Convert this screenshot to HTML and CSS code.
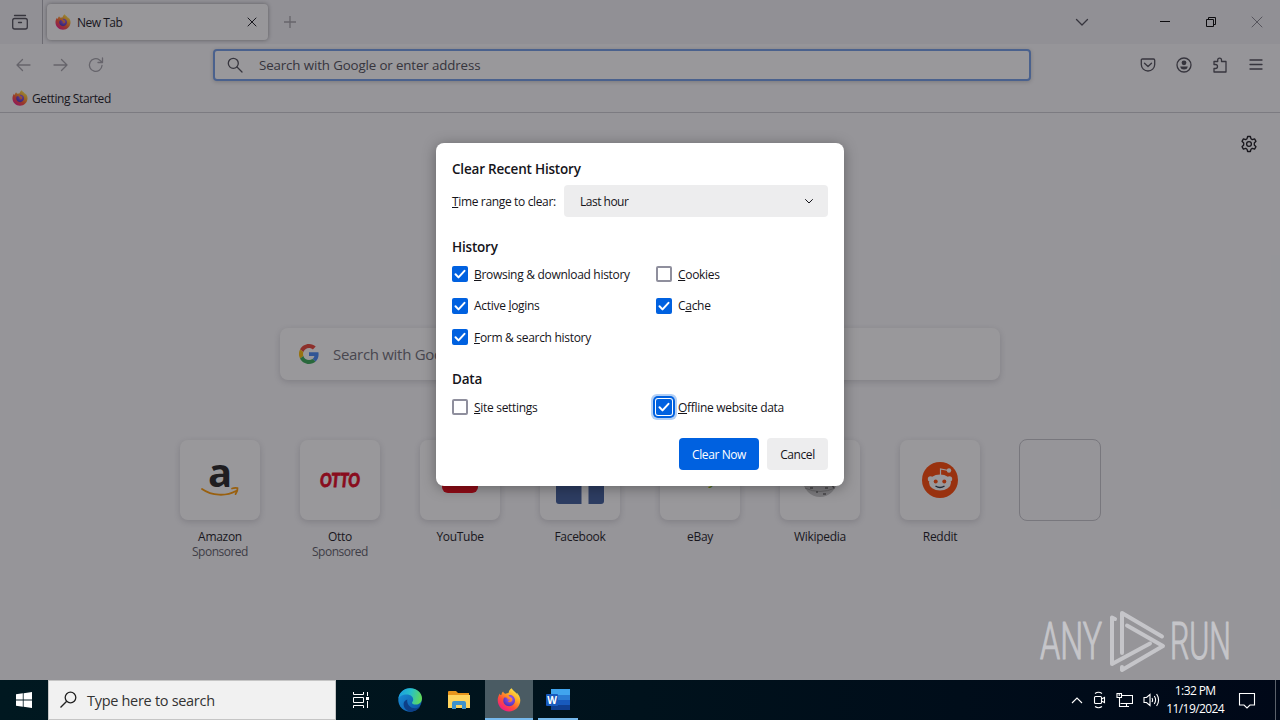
FILE: index.html
```html
<!DOCTYPE html>
<html lang="en">
	<head>
		<meta charset="utf-8">
		<title>New Tab</title>
		<meta name="viewport" content="width=device-width, initial-scale=1">
		<link rel="stylesheet" href="styles.css">
	</head>
	<body>
		<svg class="defs" aria-hidden="true">
			<defs>
				<linearGradient id="fx-body" x1=".85" y1=".05" x2=".2" y2=".95">
					<stop offset="0" stop-color="#fff04d"/>
					<stop offset=".35" stop-color="#ffa626"/>
					<stop offset=".65" stop-color="#ff5035"/>
					<stop offset="1" stop-color="#f0158d"/>
				</linearGradient>
				<radialGradient id="fx-globe" cx=".6" cy=".3" r=".7">
					<stop offset="0" stop-color="#a458f5"/>
					<stop offset="1" stop-color="#4b34b8"/>
				</radialGradient>
				<linearGradient id="edge-wave" x1="0" y1=".3" x2="1" y2=".5">
					<stop offset="0" stop-color="#1a9de0"/>
					<stop offset=".5" stop-color="#28c0c8"/>
					<stop offset="1" stop-color="#62d957"/>
				</linearGradient>
				<linearGradient id="edge-base" x1="0" y1="0" x2="1" y2="1">
					<stop offset="0" stop-color="#1b94dc"/>
					<stop offset="1" stop-color="#0b4fa0"/>
				</linearGradient>
				<symbol id="firefox" viewBox="0 0 24 24">
					<path fill="url(#fx-body)" d="M22.3 8.2c-.6-1.5-1.8-2.9-2.8-3.5.4.8.8 1.7 1 2.4C19 3.800 16 3 14.600.3c-2 1.200-2.900 3.200-3.100 4.600-1 .1-2 .4-2.900.9-1.200-.3-2-.9-2.500-2.300C5 4.500 4.400 6 4.400 7.100 3.600 7.200 3 6.500 2.800 5.500 1.300 8 .7 10 .7 12.300.7 18.500 5.800 23.500 12 23.500s11.300-5 11.300-11.200c0-1.500-.4-2.900-1-4.100z"/>
					<path fill="url(#fx-globe)" d="M11.500 7.200c3.200-.6 6.500 1.500 6.500 5.300 0 3.300-2.600 5.700-5.800 5.700-3.300 0-5.900-2.500-5.900-5.700 0-1.200.4-2.200 1-3 1 .2 2.200-.1 3.100.4-.2.900.1 1.400 1 1.500l1.700.2c-.4 1.200-1.500 1.300-2.300 1.300.6 1.200 1.600 1.500 2.900 1 2-.8 2.200-3.200.5-4.200-.8-.6-1.900-.7-2.700-2.500z"/>
				</symbol>
				<symbol id="check" viewBox="0 0 16 16">
					<path d="M3.500 8.300l3 3.100 6-6.600" fill="none" stroke="#fff" stroke-width="2" stroke-linecap="round" stroke-linejoin="round"/>
				</symbol>
			</defs>
		</svg>

		<div class="browser">
			<header class="titlebar">
				<div class="firefox-view">
					<svg width="18" height="18" viewBox="0 0 18 18" class="line soft"><rect x="1.700" y="5.500" width="14.600" height="10.500" rx="2"/><path d="M3.500 2.500h11M7.500 9.500h3"/></svg>
				</div>
				<div class="tab">
					<svg width="16" height="16"><use href="#firefox"/></svg>
					<span class="tab-title">New Tab</span>
					<svg width="10" height="10" viewBox="0 0 10 10" class="line thin"><path d="M1 1l8 8M9 1L1 9"/></svg>
				</div>
				<svg class="new-tab line faded" width="12" height="12" viewBox="0 0 12 12"><path d="M6 0v12M0 6h12"/></svg>
				<div class="window-controls">
					<svg class="line soft" width="14" height="14" viewBox="0 0 14 14"><path d="M1.500 4.500L7 10l5.500-5.500"/></svg>
					<svg class="line black gap" width="12" height="12" viewBox="0 0 12 12"><path d="M1 5.500h10"/></svg>
					<svg class="line black" width="12" height="12" viewBox="0 0 12 12"><path d="M1.500 3.500h7v7h-7zM3.500 3.500v-2h7v7h-2"/></svg>
					<svg class="line thin faded dark" width="12" height="12" viewBox="0 0 12 12"><path d="M1 1l10 10M11 1L1 11"/></svg>
				</div>
			</header>

			<nav class="navbar">
				<div class="nav-buttons">
					<svg class="line faded" width="16" height="16" viewBox="0 0 16 16"><path d="M14 8H1M6.500 2.500L1 8l5.500 5.500"/></svg>
					<svg class="line faded" width="16" height="16" viewBox="0 0 16 16"><path d="M2 8h13M9.500 2.500L15 8l-5.500 5.500"/></svg>
					<svg class="line faded" width="16" height="16" viewBox="0 0 16 16"><path d="M14 8.500A6.300 6.300 0 1 1 11.500 3l2.500 2M14.500 1v4.500H10"/></svg>
				</div>
				<div class="urlbar">
					<svg class="line soft" width="16" height="16" viewBox="0 0 16 16"><circle cx="6.300" cy="6.300" r="5"/><path d="M10 10l5 5"/></svg>
					<span>Search with Google or enter address</span>
				</div>
				<div class="nav-tools">
					<svg class="line soft" width="16" height="16" viewBox="0 0 16 16"><path d="M2.500 2h11q1.200 0 1.200 1.200V7.500a6.700 6.500 0 0 1-13.400 0V3.200Q1.300 2 2.500 2zM4.500 6.300L8 9.500l3.500-3.200"/></svg>
					<svg class="line soft" width="16" height="16" viewBox="0 0 16 16"><circle cx="8" cy="8" r="7"/><circle class="solid" cx="8" cy="5.800" r="2.400"/><path class="solid" d="M4.200 9.500h7.600c-.5 2.400-1.900 3-3.800 3S4.700 11.900 4.200 9.500z"/></svg>
					<svg class="line soft" width="16" height="16" viewBox="0 0 16 16"><path d="M2 15V11.500h1.500a2 2 0 0 0 0-4H2V4.500h3.700V3a1.900 1.900 0 0 1 3.800 0v1.500H14V15z"/></svg>
					<svg class="line soft" width="16" height="16" viewBox="0 0 16 16"><path d="M2 3h12M2 7.500h12M2 12h12"/></svg>
				</div>
			</nav>

			<div class="bookmarks">
				<svg width="16" height="16"><use href="#firefox"/></svg>
				<span>Getting Started</span>
			</div>

			<main class="newtab">
				<svg class="settings line" width="18" height="18" viewBox="0 0 18 18"><circle cx="9" cy="9" r="2.400"/><path d="M7.600 1.500h2.800l.6 2.300 1.300.8 2.300-.7L16 6.300 14.300 8v2l1.700 1.700-1.400 2.400-2.300-.7-1.300.8-.6 2.300H7.600L7 14.200l-1.300-.8-2.300.7L2 11.700 3.700 10V8L2 6.300l1.400-2.400 2.300.7L7 3.800z"/></svg>
				<div class="search-box">
					<svg width="20" height="20" viewBox="0 0 48 48">
						<path fill="#ea4335" d="M24 9.500c3.500 0 6.700 1.200 9.200 3.600l6.900-6.900C35.900 2.400 30.500 0 24 0 14.600 0 6.500 5.400 2.600 13.200l8 6.200C12.400 13.700 17.700 9.500 24 9.500z"/>
						<path fill="#4285f4" d="M47 24.600c0-1.600-.2-3.100-.4-4.600H24v9h12.900c-.6 3-2.300 5.500-4.700 7.200l7.700 6C44.400 38 47 31.800 47 24.600z"/>
						<path fill="#fbbc05" d="M10.500 28.600a14.500 14.500 0 0 1 0-9.200l-8-6.200a24 24 0 0 0 0 21.600z"/>
						<path fill="#34a853" d="M24 48c6.500 0 11.900-2.100 15.900-5.800l-7.700-6c-2.200 1.400-4.900 2.300-8.200 2.300-6.300 0-11.600-4.200-13.500-9.900l-8 6.200C6.500 42.600 14.600 48 24 48z"/>
					</svg>
					<span>Search with Google or enter address</span>
				</div>

				<div class="top-sites">
					<div class="site">
						<div class="tile">
							<svg width="80" height="80" viewBox="-16 -16 80 80"><text class="amazon-a" x="24" y="31" text-anchor="middle">a</text><path fill="none" stroke="#f90" stroke-width="1.800" stroke-linecap="round" d="M6 33c10 7 24 7.500 34 2M36 32.500c2-.8 4-.8 5.500-.4.300 2-.5 4-2 6"/></svg>
						</div>
						<span>Amazon</span>
						<span class="sponsored">Sponsored</span>
					</div>
					<div class="site">
						<div class="tile">
							<svg width="80" height="80" viewBox="-16 -16 80 80"><text class="otto" x="4" y="31" textLength="40" lengthAdjust="spacingAndGlyphs">OTTO</text></svg>
						</div>
						<span>Otto</span>
						<span class="sponsored">Sponsored</span>
					</div>
					<div class="site">
						<div class="tile">
							<svg width="48" height="48" viewBox="0 0 48 48"><rect x="6" y="11" width="36" height="26" rx="6" fill="#f00010"/><path fill="#fff" d="M20 18l10 6-10 6z"/></svg>
						</div>
						<span>YouTube</span>
					</div>
					<div class="site">
						<div class="tile">
							<svg width="48" height="48" viewBox="0 0 48 48"><rect width="48" height="48" rx="3" fill="#3b5998"/><path fill="#fff" d="M25.500 48V29h-6v-7h6v-6c0-6 4-9 9-9h5v7h-3c-3 0-4 1.500-4 4v4h7l-1 7h-6v19z"/></svg>
						</div>
						<span>Facebook</span>
					</div>
					<div class="site">
						<div class="tile">
							<svg width="48" height="48" viewBox="0 0 48 48"><text class="ebay" x="5" y="28"><tspan fill="#e53238">e</tspan><tspan fill="#0064d2">b</tspan><tspan fill="#f5af02">a</tspan><tspan fill="#86b817">y</tspan></text><path d="M37 30l1.500-2" stroke="#444"/></svg>
						</div>
						<span>eBay</span>
					</div>
					<div class="site">
						<div class="tile">
							<svg width="48" height="48" viewBox="0 0 48 48"><circle cx="24" cy="24" r="17" fill="#c8c8c8"/><path d="M9 32q15 7 30 0" fill="none" stroke="#a0a0a0"/><path d="M14 32h3M29 32h3M20 36h2M27 38h3M36 29l2 3" stroke="#666" stroke-width="1.500"/></svg>
						</div>
						<span>Wikipedia</span>
					</div>
					<div class="site">
						<div class="tile">
							<svg width="48" height="48" viewBox="0 0 48 48"><circle cx="24" cy="24" r="18" fill="#ff4500"/><path d="M24.500 19v-6l8 1.500" fill="none" stroke="#fff" stroke-width="1.200"/><circle cx="33" cy="14.500" r="2.200" fill="#fff"/><circle cx="14.500" cy="23" r="2.700" fill="#fff"/><circle cx="33.500" cy="23" r="2.700" fill="#fff"/><ellipse cx="24" cy="26.500" rx="11" ry="8" fill="#fff"/><circle cx="19.700" cy="25.500" r="2" fill="#ff4500"/><circle cx="28.300" cy="25.500" r="2" fill="#ff4500"/><path d="M19.500 30q4.500 3 9 0" fill="none" stroke="#234" stroke-width="1.400"/></svg>
						</div>
						<span>Reddit</span>
					</div>
					<div class="site">
						<div class="tile empty"></div>
					</div>
				</div>
			</main>

			<div class="overlay">
				<form class="dialog">
					<h1>Clear Recent History</h1>
					<div class="range">
						<span><u>T</u>ime range to clear:</span>
						<div class="select">
							<span>Last hour</span>
							<svg class="line thin" width="10" height="10" viewBox="0 0 10 10"><path d="M1.500 3.500L5 7l3.500-3.500"/></svg>
						</div>
					</div>

					<h2>History</h2>
					<div class="options">
						<div class="option"><i class="box checked"><svg width="16" height="16"><use href="#check"/></svg></i><span><u>B</u>rowsing &amp; download history</span></div>
						<div class="option"><i class="box"></i><span><u>C</u>ookies</span></div>
						<div class="option"><i class="box checked"><svg width="16" height="16"><use href="#check"/></svg></i><span>Active <u>l</u>ogins</span></div>
						<div class="option"><i class="box checked"><svg width="16" height="16"><use href="#check"/></svg></i><span>C<u>a</u>che</span></div>
						<div class="option"><i class="box checked"><svg width="16" height="16"><use href="#check"/></svg></i><span><u>F</u>orm &amp; search history</span></div>
					</div>

					<h2 class="data">Data</h2>
					<div class="options">
						<div class="option"><i class="box"></i><span><u>S</u>ite settings</span></div>
						<div class="option"><i class="box checked focused"><svg width="16" height="16"><use href="#check"/></svg></i><span><u>O</u>ffline website data</span></div>
					</div>

					<div class="buttons">
						<button type="button" class="primary">Clear Now</button>
						<button type="button">Cancel</button>
					</div>
				</form>
			</div>

			<svg class="watermark" width="200" height="73" viewBox="0 0 200 73">
				<text x="4" y="52" textLength="62" lengthAdjust="spacingAndGlyphs">ANY</text>
				<text x="134" y="52" textLength="61" lengthAdjust="spacingAndGlyphs">RUN</text>
				<path d="M79 12l-3-1.500V57l38-20.500M86 46V6l40 23.500M91 18.500l36 20.500-41 24v-3"/>
			</svg>
		</div>

		<footer class="taskbar">
			<div class="start">
				<svg width="16" height="16" viewBox="0 0 16 16" fill="#fff"><path d="M0 2.300l6.800-1v6.300H0zM7.600 1.200L16 0v7.600H7.600zM0 8.400h6.800v6.400L0 13.800zM7.600 8.400H16V16l-8.400-1.200z"/></svg>
			</div>
			<div class="task-search">
				<svg width="18" height="18" viewBox="0 0 18 18" fill="none" stroke="#222" stroke-width="1.300"><circle cx="10.500" cy="6.500" r="5.300"/><path d="M6.700 10.300L.5 16.500"/></svg>
				<span>Type here to search</span>
			</div>
			<div class="apps">
				<div class="app">
					<svg width="18" height="18" viewBox="0 0 18 18" fill="none" stroke="#fff"><path d="M1.500 1v2.500h10V1M1.500 17v-2.500h10V17M1.500 6.500h10v5h-10zM15.500 1v4M15.500 10v7"/><path d="M14 6h3v3h-3z" fill="#fff" stroke="none"/></svg>
				</div>
				<div class="app">
					<svg width="24" height="24" viewBox="0 0 24 24"><circle cx="12" cy="12" r="11.700" fill="url(#edge-base)"/><path fill="url(#edge-wave)" d="M.4 11C1 4.500 6 .2 12 .2c7 0 12 4.800 12 10 0 4-2.900 6.300-6.200 6.300-2.500 0-3.800-.9-3.800-1.800 0-.7 1.200-1.200 1.200-3.200 0-2.600-2.700-4.900-6.500-4.900C4.500 6.600 1.200 8.500.4 11z"/><path fill="#0d3f87" d="M9.300 11.500c-.8 5 3.200 8.800 7.600 8.800 2 0 3.800-.6 5.200-1.500-2.300 3.300-5.800 5-9.800 4.900-4.200-1.100-6.800-4.200-6.700-7.700 0-2 1.400-3.900 3.700-4.500z"/></svg>
				</div>
				<div class="app">
					<svg width="22" height="20" viewBox="0 0 22 20"><path fill="#e8951c" d="M0 2q0-1 1-1h7l2 2h11v5H0z"/><path fill="#ffd45e" d="M0 5h22v13H0z"/><path fill="#3f92cc" d="M4 19v-6q0-2 2-2h10q2 0 2 2v6h-4v-4H8v4z"/></svg>
				</div>
				<div class="app running active">
					<svg width="24" height="24"><use href="#firefox"/></svg>
				</div>
				<div class="app running">
					<svg width="26" height="22" viewBox="0 0 26 22"><path fill="#41a5ee" d="M6 0h19v6H6z"/><path fill="#2b7cd3" d="M6 6h19v5H6z"/><path fill="#185abd" d="M6 11h19v5H6z"/><path fill="#103f91" d="M6 16h19v5H6z"/><rect x="1" y="5" width="12" height="12" rx="1" fill="#185abd"/><text class="word-w" x="7" y="14.500" text-anchor="middle">W</text></svg>
				</div>
			</div>
			<div class="tray">
				<svg width="12" height="8" viewBox="0 0 12 8"><path d="M1 7l5-5 5 5"/></svg>
				<svg width="13" height="18" viewBox="0 0 13 18"><rect x="1.500" y="5.500" width="7" height="7" rx="1"/><path d="M8.500 8l3-1.500v5l-3-1.500M2 2.500q3.500-2.500 7 0M2 15.500q3.500 2.500 7 0"/></svg>
				<svg width="17" height="16" viewBox="0 0 17 16"><path d="M5.500 3.500h11v8h-12M3.500 6v8.500H13M10.500 12v2M1 1.500h4.500v4H1zM3.200 1v3"/></svg>
				<svg width="17" height="16" viewBox="0 0 17 16"><path d="M1 5.500h2.500L7 2.500v11L3.500 10.500H1zM9 6q1.200 2 0 4M11.300 4q2.600 4 0 8M13.600 2q4 6 0 12"/></svg>
				<div class="clock"><span>1:32 PM</span><span>11/19/2024</span></div>
				<svg width="18" height="18" viewBox="0 0 18 18"><path d="M1.500 2.500h15v11.500H12l-3 3-3-3H1.500z"/></svg>
			</div>
		</footer>
	</body>
</html>
```

FILE: styles.css
```css
* {
	box-sizing: border-box;
}
body {
	margin: 0;
	width: 1280px;
	height: 720px;
	overflow: hidden;
	font-family: "Open Sans", "Noto Sans", sans-serif;
	font-size: 12px;
	letter-spacing: -0.3px;
	color: #15141a;
}
svg {
	display: block;
	flex: none;
}
span {
	white-space: nowrap;
}
.defs {
	position: absolute;
	width: 0;
	height: 0;
}
.line {
	fill: none;
	stroke: #15141a;
	stroke-width: 1.3;
	stroke-linecap: round;
	stroke-linejoin: round;
}
.line.thin {
	stroke-width: 1;
}
.line.black {
	stroke: #000;
	stroke-width: 1;
	stroke-linecap: butt;
	stroke-linejoin: miter;
}
.line.soft {
	stroke: #4c4b55;
}
.line.faded {
	stroke: #a2a1a8;
}
.line.dark {
	stroke: #85848c;
}
.solid {
	fill: #4c4b55;
	stroke: none;
}

/* browser window */
.browser {
	position: relative;
	display: flex;
	flex-direction: column;
	height: 680px;
	background: #f9f9fb;
}
.titlebar {
	display: flex;
	align-items: center;
	height: 44px;
	background: #f0f0f4;
}
.firefox-view {
	display: flex;
	align-items: center;
	width: 43px;
	height: 44px;
	padding-left: 11px;
	border-right: 1px solid #b0b0b6;
}
.tab {
	display: flex;
	align-items: center;
	width: 221px;
	height: 36px;
	margin-left: 4px;
	padding: 0 11px 0 8px;
	background: #fdfdfe;
	border-radius: 4px;
	box-shadow: 0 0 4px rgba(0, 0, 0, 0.4);
}
.tab-title {
	flex: 1;
	margin-left: 6px;
	letter-spacing: -0.5px;
}
.new-tab {
	margin-left: 16px;
}
.window-controls {
	display: flex;
	align-items: center;
	gap: 34px;
	margin-left: auto;
	padding-right: 17px;
}
.window-controls .gap {
	margin-left: 36px;
}
.navbar {
	display: flex;
	align-items: center;
	height: 42px;
	padding-bottom: 1px;
}
.nav-buttons {
	display: flex;
	gap: 20px;
	width: 213px;
	padding-left: 16px;
}
.urlbar {
	display: flex;
	align-items: center;
	gap: 16px;
	width: 818px;
	height: 32px;
	padding-left: 12px;
	border: 2px solid #709ce6;
	border-radius: 4px;
	box-shadow: 0 1px 4px rgba(0, 0, 0, 0.2);
	background: #fff;
	font-size: 13.3px;
	letter-spacing: -0.12px;
	color: #4c4b55;
}
.nav-tools {
	display: flex;
	gap: 20px;
	margin-left: auto;
	padding-right: 16px;
}
.bookmarks {
	display: flex;
	align-items: center;
	gap: 4px;
	height: 27px;
	padding: 0 0 2px 12px;
	border-bottom: 1px solid #cacacf;
	letter-spacing: -0.4px;
}
.newtab {
	flex: 1;
	display: flex;
	flex-direction: column;
	align-items: center;
}
.settings {
	align-self: flex-end;
	margin: 22px 22px 0 0;
}
.search-box {
	display: flex;
	align-items: center;
	gap: 14px;
	width: 720px;
	height: 52px;
	margin-top: 175px;
	padding-left: 19px;
	background: #fff;
	border-radius: 8px;
	box-shadow: 0 2px 6px rgba(58, 57, 68, 0.2);
	font-size: 15px;
	color: #6d6c75;
}
.top-sites {
	display: flex;
	margin-top: 60px;
}
.site {
	display: flex;
	flex-direction: column;
	align-items: center;
	width: 120px;
	line-height: 15px;
}
.tile {
	display: flex;
	align-items: center;
	justify-content: center;
	width: 80px;
	height: 80px;
	margin-bottom: 9px;
	background: #fff;
	border-radius: 8px;
	box-shadow: 0 2px 6px rgba(58, 57, 68, 0.2);
}
.tile.empty {
	width: 82px;
	height: 82px;
	margin-top: -1px;
	background: none;
	border: 1px solid #c3c3c9;
	box-shadow: none;
}
.sponsored {
	color: #5b5b66;
	letter-spacing: -0.5px;
}
.amazon-a {
	font: bold 40px "Open Sans", sans-serif;
	fill: #221f1f;
}
.otto {
	font: italic 900 19px Lato, sans-serif;
	letter-spacing: 0;
	fill: #e2001a;
	stroke: #e2001a;
	stroke-width: 0.8;
}
.ebay {
	font: 18px "Liberation Sans", sans-serif;
	letter-spacing: -1px;
}

/* modal */
.overlay {
	position: absolute;
	inset: 0;
	display: flex;
	justify-content: center;
	align-items: flex-start;
	padding-top: 143px;
	background: rgba(28, 27, 34, 0.45);
}
.dialog {
	width: 408px;
	height: 343px;
	padding: 16px;
	background: #fff;
	border-radius: 8px;
	box-shadow: 0 2px 14px rgba(0, 0, 0, 0.35);
}
.dialog h1,
.dialog h2 {
	margin: 0;
	font-size: 13.5px;
	font-weight: 600;
	line-height: 20px;
	letter-spacing: -0.2px;
}
.dialog h2 {
	margin-top: 20px;
}
.dialog .data {
	margin-top: 24px;
}
.dialog u {
	text-underline-offset: 1px;
	text-decoration-thickness: 1px;
}
.range {
	display: flex;
	align-items: center;
	justify-content: space-between;
	margin-top: 6px;
	letter-spacing: -0.35px;
}
.select {
	display: flex;
	align-items: center;
	justify-content: space-between;
	width: 264px;
	height: 32px;
	padding: 0 14px 0 16px;
	background: #ededee;
	border-radius: 4px;
	letter-spacing: -0.5px;
}
.options {
	display: grid;
	grid-template-columns: 204px 1fr;
	row-gap: 15.5px;
	margin-top: 9px;
}
.data + .options {
	margin-top: 10px;
}
.option {
	display: flex;
	align-items: center;
	gap: 6px;
	height: 16px;
}
.box {
	flex: none;
	width: 16px;
	height: 16px;
	border: 2px solid #8f8f9d;
	border-radius: 2px;
}
.box.checked {
	border: 0;
	background: #0061e0;
}
.box.focused {
	box-shadow: 0 0 0 1px #fff, 0 0 0 3px #0061e0, 0 0 0 5px #b3d0f6;
}
.buttons {
	display: flex;
	justify-content: flex-end;
	gap: 8px;
	margin-top: 23px;
}
.buttons button {
	height: 32px;
	width: 61px;
	padding: 0;
	border: 0;
	border-radius: 4px;
	background: #ededee;
	font: inherit;
	letter-spacing: -0.4px;
	color: #15141a;
}
.buttons .primary {
	width: 80px;
	background: #0061e0;
	color: #fff;
}
.watermark {
	position: absolute;
	left: 1036px;
	top: 607px;
	fill: none;
	stroke: #c5c5c9;
	stroke-width: 4;
	stroke-linecap: round;
	stroke-linejoin: round;
}
.watermark text {
	font: 300 51px Roboto, sans-serif;
	letter-spacing: 0;
	fill: #c5c5c9;
	stroke-width: 1.2;
}

/* windows taskbar */
.taskbar {
	display: flex;
	height: 40px;
	background: linear-gradient(90deg, #001820, #00121c 50%, #000818);
}
.start {
	display: flex;
	align-items: center;
	justify-content: center;
	width: 48px;
}
.task-search {
	display: flex;
	align-items: center;
	gap: 9px;
	width: 288px;
	padding-left: 11px;
	background: #f1f1f1;
	border: 1px solid #c5c5c5;
	font-size: 14.5px;
	color: #333;
}
.apps {
	display: flex;
	gap: 1px;
	margin-left: 1px;
}
.app {
	display: flex;
	align-items: center;
	justify-content: center;
	width: 48px;
}
.app:first-child {
	width: 47px;
	margin-right: 1px;
}
.app.running {
	background: linear-gradient(#76b9ed, #76b9ed) center bottom / 40px 2px no-repeat;
}
.app.active {
	margin-left: 1px;
	background: linear-gradient(#76b9ed, #76b9ed) center bottom / 48px 2px no-repeat #4a5b63;
}
.word-w {
	font: bold 10px "Open Sans", sans-serif;
	fill: #fff;
}
.tray {
	display: flex;
	align-items: center;
	gap: 10px;
	margin-left: auto;
	margin-right: 4px;
	padding-right: 19px;
	border-right: 1px solid #5b616b;
	color: #fff;
}
.tray svg {
	fill: none;
	stroke: #fff;
	stroke-width: 1.1;
}
.clock {
	display: flex;
	flex-direction: column;
	align-items: center;
	line-height: 18px;
	margin-left: -4px;
	margin-right: 4px;
	letter-spacing: -0.6px;
}
```
